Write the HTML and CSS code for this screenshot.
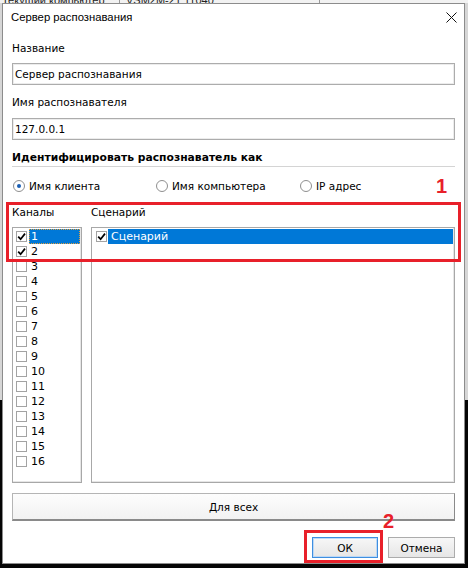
FILE: index.html
```html
<!DOCTYPE html>
<html lang="ru">
<head>
<meta charset="utf-8">
<title>Сервер распознавания</title>
<link rel="stylesheet" href="styles.css">
</head>
<body>
<div class="desk">
  <div class="behind"><span class="b1">Текущий компьютер</span><span class="b2">VSM2M-21 11040</span></div>
  <div class="window">
    <div class="titlebar">
      <span class="title">Сервер распознавания</span>
      <svg class="close" width="11" height="11" viewBox="0 0 11 11"><path d="M0.5 0.5 L10.5 10.5 M10.5 0.5 L0.5 10.5"/></svg>
    </div>
    <div class="body">
      <div class="label l1">Название</div>
      <div class="input">Сервер распознавания</div>
      <div class="label l2">Имя распознавателя</div>
      <div class="input i2">127.0.0.1</div>
      <div class="heading">Идентифицировать распознаватель как</div>
      <div class="radios">
        <div class="radio"><span class="circle on"></span><span>Имя клиента</span></div>
        <div class="radio"><span class="circle"></span><span>Имя компьютера</span></div>
        <div class="radio"><span class="circle"></span><span>IP адрес</span></div>
      </div>
      <div class="lists">
        <div class="col ch">
          <div class="label">Каналы</div>
          <div class="listbox">
            <div class="row"><span class="cb on"><svg viewBox="0 0 9 9"><path d="M1.2 4.6 L3.6 7.2 L8 1.6"/></svg></span><span class="txt sel focus">1</span></div>
            <div class="row"><span class="cb on"><svg viewBox="0 0 9 9"><path d="M1.2 4.6 L3.6 7.2 L8 1.6"/></svg></span><span class="txt">2</span></div>
            <div class="row"><span class="cb"></span><span class="txt">3</span></div>
            <div class="row"><span class="cb"></span><span class="txt">4</span></div>
            <div class="row"><span class="cb"></span><span class="txt">5</span></div>
            <div class="row"><span class="cb"></span><span class="txt">6</span></div>
            <div class="row"><span class="cb"></span><span class="txt">7</span></div>
            <div class="row"><span class="cb"></span><span class="txt">8</span></div>
            <div class="row"><span class="cb"></span><span class="txt">9</span></div>
            <div class="row"><span class="cb"></span><span class="txt">10</span></div>
            <div class="row"><span class="cb"></span><span class="txt">11</span></div>
            <div class="row"><span class="cb"></span><span class="txt">12</span></div>
            <div class="row"><span class="cb"></span><span class="txt">13</span></div>
            <div class="row"><span class="cb"></span><span class="txt">14</span></div>
            <div class="row"><span class="cb"></span><span class="txt">15</span></div>
            <div class="row"><span class="cb"></span><span class="txt">16</span></div>
          </div>
        </div>
        <div class="col sc">
          <div class="label">Сценарий</div>
          <div class="listbox">
            <div class="row"><span class="cb on"><svg viewBox="0 0 9 9"><path d="M1.2 4.6 L3.6 7.2 L8 1.6"/></svg></span><span class="txt sel">Сценарий</span></div>
          </div>
        </div>
      </div>
      <div class="allbtn">Для всех</div>
      <div class="footer">
        <div class="btn ok">ОК</div>
        <div class="btn">Отмена</div>
      </div>
    </div>
  </div>
  <div class="mark box1"></div>
  <div class="mark box2"></div>
  <div class="num num1">1</div>
  <div class="num num2">2</div>
</div>
</body>
</html>
```

FILE: styles.css
```css
* { box-sizing: border-box; }
html, body { margin: 0; padding: 0; }
body {
  width: 468px;
  height: 568px;
  overflow: hidden;
  background: linear-gradient(to bottom, #d6d6d6 0, #d6d6d6 400px, #050505 400px);
  font-family: "DejaVu Sans", Verdana, sans-serif;
  font-size: 10.5px;
  color: #000;
}
.desk {
  position: relative;
  width: 468px;
  height: 568px;
}
.behind {
  height: 3px;
  overflow: hidden;
  background: #f2f2f2;
  display: flex;
  font-family: "Liberation Sans", Arial, sans-serif;
  font-size: 11px;
  line-height: 0;
  color: #222;
}
.behind span { display: block; height: 3px; white-space: nowrap; }
.b1 { width: 120px; padding-left: 2px; border-right: 1px solid #999; }
.b2 { width: 200px; padding-left: 6px; border-right: 1px solid #999; }

.window {
  margin-left: 2px;
  width: 463px;
  height: 561px;
  background: #fff;
  border: 1px solid #8c8c8c;
  display: flex;
  flex-direction: column;
}
.titlebar {
  height: 26px;
  display: flex;
  align-items: center;
  justify-content: space-between;
  padding: 0 7px 0 8px;
}
.title {
  font-family: "Liberation Sans", Arial, sans-serif;
  font-size: 11.3px;
  line-height: 26px;
  color: #000;
}
.close path { stroke: #111; stroke-width: 1; fill: none; }

.body {
  padding: 0 9px 5px;
  display: flex;
  flex-direction: column;
}
.label { line-height: 15px; height: 15px; white-space: nowrap; }
.l1 { margin-top: 11px; }
.l2 { margin-top: 10px; }
.input {
  margin-top: 7px;
  height: 22px;
  border: 1px solid #acacac;
  box-shadow: inset 0 0 0 1px #ececec;
  padding-left: 2px;
  line-height: 20px;
  white-space: nowrap;
}
.i2 { margin-top: 8px; }
.heading {
  margin-top: 10px;
  font-weight: bold;
  font-size: 10.75px;
  line-height: 15px;
  padding-bottom: 1px;
  border-bottom: 1px solid #d4d4d4;
}
.radios {
  margin-top: 11px;
  height: 15px;
  display: grid;
  grid-template-columns: 143px 144px 1fr;
}
.radio { display: flex; align-items: center; gap: 4px; padding-left: 1px; white-space: nowrap; }
.circle {
  width: 12px;
  height: 12px;
  border-radius: 50%;
  border: 1px solid #8f8f8f;
  background: #fff;
  display: flex;
  align-items: center;
  justify-content: center;
}
.circle.on::after {
  content: "";
  width: 4px;
  height: 4px;
  border-radius: 50%;
  background: #1a5fb4;
}

.lists {
  margin-top: 12px;
  display: flex;
  gap: 9px;
}
.col { display: flex; flex-direction: column; }
.ch { width: 70px; }
.sc { flex: 1; }
.listbox {
  margin-top: 7px;
  height: 256px;
  border: 1px solid #a8a8a8;
  box-shadow: inset -1px -1px 0 #e6e6e6;
  padding-top: 1px;
}
.row {
  height: 15px;
  display: flex;
  align-items: center;
}
.ch .row { padding-left: 3px; }
.sc .row { padding-left: 4px; }
.cb {
  width: 11px;
  height: 11px;
  border: 1px solid #a3a3a3;
  background: #fff;
  flex: none;
  display: flex;
  align-items: center;
  justify-content: center;
}
.cb svg { width: 9px; height: 9px; }
.cb path { stroke: #000; stroke-width: 1.7; fill: none; }
.txt {
  height: 15px;
  line-height: 15px;
  white-space: nowrap;
}
.ch .txt { margin-left: 2px; padding-left: 2px; font-size: 11px; }
.sc .txt { margin-left: 1px; padding-left: 3px; font-size: 11px; }
.txt.sel {
  flex: 1;
  margin-right: 1px;
  background: #0078d7;
  color: #fff;
}
.txt.focus { outline: 1px dotted #e0a040; outline-offset: -1px; }

.allbtn {
  margin-top: 10px;
  height: 28px;
  border: 1px solid #b5b5b5;
  border-right-color: #8a8a8a;
  border-bottom: 2px solid #8a8a8a;
  background: linear-gradient(#fdfdfd, #f2f2f2);
  display: flex;
  align-items: center;
  justify-content: center;
}
.footer {
  margin-top: 16px;
  display: flex;
  justify-content: flex-end;
  gap: 10px;
}
.btn {
  width: 67px;
  height: 21px;
  border: 1px solid #acacac;
  background: linear-gradient(#f7f7f7, #e6e6e6);
  display: flex;
  align-items: center;
  justify-content: center;
}
.btn.ok {
  width: 66px;
  border: 1px solid #3d8ee0;
  box-shadow: inset 0 0 0 1px #bcd8f5;
}

.mark {
  position: absolute;
  border: 3px solid #e8202a;
}
.box1 { left: 6px; top: 202px; width: 455px; height: 60px; }
.box2 { left: 304px; top: 530px; width: 79px; height: 33px; }
.num {
  position: absolute;
  font-family: "Liberation Sans", Arial, sans-serif;
  font-weight: bold;
  font-size: 20px;
  line-height: 20px;
  color: #e8202a;
}
.num1 { left: 436px; top: 176px; }
.num2 { left: 383px; top: 511px; }
```
